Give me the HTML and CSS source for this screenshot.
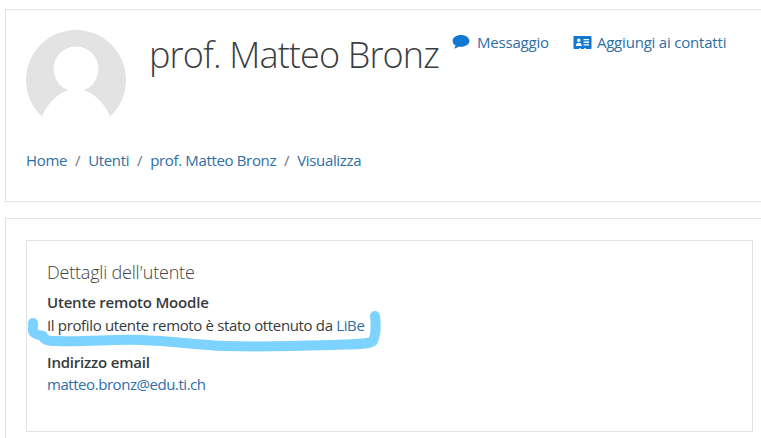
FILE: index.html
```html
<!DOCTYPE html>
<html lang="en">
<head>
    <meta charset="UTF-8">
    <meta name="viewport" content="width=device-width, initial-scale=1.0">
    <title>prof. Matteo Bronz: Profilo</title>
    <link rel="stylesheet" href="styles.css">
</head>
<body>
    <div class="page">
        <header class="card header-card">
            <div class="head-row">
                <svg class="avatar" viewBox="0 0 100 100" width="100" height="100">
                    <circle cx="50" cy="50" r="50" fill="#e3e3e3"/>
                    <circle cx="50" cy="39" r="22.500" fill="#fff"/>
                    <path d="M16 86 C24 68 38 59 50 59 C62 59 76 68 84 86 C76 97 62 102 50 102 C38 102 24 97 16 86 Z" fill="#fff"/>
                </svg>
                <h1 class="name">prof. Matteo Bronz</h1>
                <div class="actions">
                    <a class="action" href="#">
                        <svg class="icon" viewBox="0 0 18 16" width="18" height="16">
                            <path d="M9 1C4.200 1 .6 3.600 .6 6.900c0 1.900 1.200 3.500 3 4.600-.2 1.100-.8 2.100-1.600 3 1.900-.2 3.500-.9 4.700-2 .7.1 1.500.2 2.300.2 4.800 0 8.400-2.600 8.400-5.800S13.800 1 9 1z" fill="#1177d1"/>
                        </svg>
                        Messaggio
                    </a>
                    <a class="action action-contact" href="#">
                        <svg class="icon" viewBox="0 0 19 15" width="19" height="15">
                            <path fill-rule="evenodd" d="M1.500 1h16c.6 0 1 .4 1 1v11c0 .6-.4 1-1 1h-4.500c0-.7-.5-1-1-1s-1 .3-1 1h-3c0-.7-.5-1-1-1s-1 .3-1 1h-4.500c-.6 0-1-.4-1-1V2c0-.6.4-1 1-1zM5.800 3.500a1.800 1.800 0 1 0 0 3.600 1.800 1.800 0 0 0 0-3.600zM2.800 11h6c0-2-1.300-3.200-3-3.200s-3 1.200-3 3.200zM10.500 4v1.300h5.500V4zM10.500 6.600v1.300h5.500V6.600zM10.500 9.200v1.300h5.500V9.200z" fill="#1177d1"/>
                        </svg>
                        Aggiungi ai contatti
                    </a>
                </div>
            </div>
            <nav class="crumbs">
                <a href="#">Home</a><span class="sep">/</span>
                <a href="#">Utenti</a><span class="sep">/</span>
                <a href="#">prof. Matteo Bronz</a><span class="sep">/</span>
                <a href="#">Visualizza</a>
            </nav>
        </header>

        <section class="card main-card">
            <div class="box">
                <h2 class="box-title">Dettagli dell'utente</h2>
                <dl class="details">
                    <dt>Utente remoto Moodle</dt>
                    <dd>Il profilo utente remoto è stato ottenuto da <a href="#">LiBe</a></dd>
                    <dt>Indirizzo email</dt>
                    <dd class="email"><a href="#">matteo.bronz@edu.ti.ch</a></dd>
                </dl>
            </div>
        </section>
    </div>

    <!-- hand drawn marker over the screenshot -->
    <svg class="marker" viewBox="0 0 761 438" width="761" height="438">
        <path d="M33 323 L33 331 C34 334 38 335 43 336 C44 340 48 341 56 341 C90 342 110 339 140 340 C175 341 195 345 225 346 C260 347 300 346 330 345 C350 344 368 345 373 341 C376 334 376 324 375 316" fill="none" stroke="#7dd3ff" stroke-width="10" stroke-linecap="round" stroke-linejoin="round"/>
    </svg>
</body>
</html>
```

FILE: styles.css
```css
html, body {
    margin: 0;
    height: 100%;
    overflow: hidden;
    background: #fff;
}
body {
    position: relative;
    font-family: "Open Sans", "Noto Sans", sans-serif;
    font-size: 15px;
    color: #373a3c;
}
a {
    color: #2f6ea5;
    text-decoration: none;
}
.page {
    box-sizing: border-box;
    width: 761px;
    height: 438px;
    overflow: hidden;
    padding: 9px 0 0 5px;
}
.card {
    width: 727px;
    border: 1px solid #e3e3e3;
    background: #fff;
    padding: 20px;
}
.header-card {
    height: 151px;
    margin-bottom: 16px;
}
.head-row {
    display: flex;
    align-items: flex-start;
    height: 100px;
}
.avatar {
    flex: none;
    margin-right: 23px;
}
.name {
    margin: -3px 0 0;
    font-size: 36px;
    font-weight: 300;
    line-height: 56px;
    white-space: nowrap;
    letter-spacing: -0.85px;
    color: #3a3d40;
}
.actions {
    display: flex;
    gap: 24px;
    margin: 2px 0 0 13px;
    white-space: nowrap;
}
.action {
    display: flex;
    align-items: center;
    gap: 7px;
    letter-spacing: -0.2px;
}
.action-contact {
    gap: 5px;
}
.crumbs {
    display: flex;
    margin-top: 19px;
    letter-spacing: -0.35px;
    line-height: 22px;
}
.sep {
    margin: 0 8px;
    color: #6c757d;
}
.main-card {
    height: 240px;
    padding-top: 21px;
}
.box {
    border: 1px solid #e3e3e3;
    height: 150px;
    padding: 20px;
}
.box-title {
    margin: -1px 0 0;
    font-size: 18px;
    font-weight: 300;
    line-height: 24px;
    letter-spacing: -0.2px;
    color: #444;
}
.details {
    margin: 8px 0 0;
    letter-spacing: -0.35px;
}
.details dt {
    font-weight: 600;
    line-height: 20px;
    letter-spacing: -0.2px;
}
.details dd {
    margin: 3px 0 17px;
    line-height: 20px;
}
.details .email {
    margin-top: 2px;
    letter-spacing: -0.45px;
}
.marker {
    position: absolute;
    left: 0;
    top: 0;
    pointer-events: none;
}
```
